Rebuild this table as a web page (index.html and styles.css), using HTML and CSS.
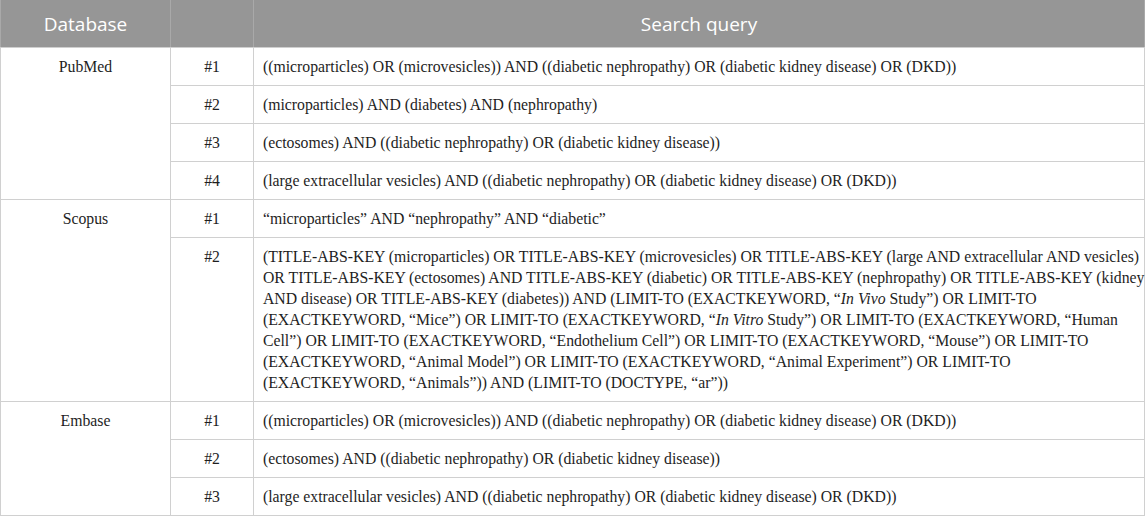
FILE: index.html
```html
<!DOCTYPE html>
<html lang="en">
<head>
<meta charset="utf-8">
<title>Search queries</title>
<link rel="stylesheet" href="styles.css">
</head>
<body>
<table class="search-table">
  <colgroup>
    <col class="col-db">
    <col class="col-num">
    <col class="col-query">
  </colgroup>
  <thead>
    <tr>
      <th class="head">Database</th>
      <th class="head"></th>
      <th class="head">Search query</th>
    </tr>
  </thead>
  <tbody>
    <tr>
      <td class="cell db" rowspan="4">PubMed</td>
      <td class="cell num">#1</td>
      <td class="cell query">((microparticles) OR (microvesicles)) AND ((diabetic nephropathy) OR (diabetic kidney disease) OR (DKD))</td>
    </tr>
    <tr>
      <td class="cell num">#2</td>
      <td class="cell query">(microparticles) AND (diabetes) AND (nephropathy)</td>
    </tr>
    <tr>
      <td class="cell num">#3</td>
      <td class="cell query">(ectosomes) AND ((diabetic nephropathy) OR (diabetic kidney disease))</td>
    </tr>
    <tr>
      <td class="cell num">#4</td>
      <td class="cell query">(large extracellular vesicles) AND ((diabetic nephropathy) OR (diabetic kidney disease) OR (DKD))</td>
    </tr>
    <tr>
      <td class="cell db" rowspan="2">Scopus</td>
      <td class="cell num">#1</td>
      <td class="cell query">“microparticles” AND “nephropathy” AND “diabetic”</td>
    </tr>
    <tr>
      <td class="cell num">#2</td>
      <td class="cell query long">(TITLE-ABS-KEY (microparticles) OR TITLE-ABS-KEY (microvesicles) OR TITLE-ABS-KEY (large AND extracellular AND vesicles)<br>
OR TITLE-ABS-KEY (ectosomes) AND TITLE-ABS-KEY (diabetic) OR TITLE-ABS-KEY (nephropathy) OR TITLE-ABS-KEY (kidney<br>
AND disease) OR TITLE-ABS-KEY (diabetes)) AND (LIMIT-TO (EXACTKEYWORD, “<i>In Vivo</i> Study”) OR LIMIT-TO<br>
(EXACTKEYWORD, “Mice”) OR LIMIT-TO (EXACTKEYWORD, “<i>In Vitro</i> Study”) OR LIMIT-TO (EXACTKEYWORD, “Human<br>
Cell”) OR LIMIT-TO (EXACTKEYWORD, “Endothelium Cell”) OR LIMIT-TO (EXACTKEYWORD, “Mouse”) OR LIMIT-TO<br>
(EXACTKEYWORD, “Animal Model”) OR LIMIT-TO (EXACTKEYWORD, “Animal Experiment”) OR LIMIT-TO<br>
(EXACTKEYWORD, “Animals”)) AND (LIMIT-TO (DOCTYPE, “ar”))</td>
    </tr>
    <tr>
      <td class="cell db" rowspan="3">Embase</td>
      <td class="cell num">#1</td>
      <td class="cell query">((microparticles) OR (microvesicles)) AND ((diabetic nephropathy) OR (diabetic kidney disease) OR (DKD))</td>
    </tr>
    <tr>
      <td class="cell num">#2</td>
      <td class="cell query">(ectosomes) AND ((diabetic nephropathy) OR (diabetic kidney disease))</td>
    </tr>
    <tr>
      <td class="cell num">#3</td>
      <td class="cell query">(large extracellular vesicles) AND ((diabetic nephropathy) OR (diabetic kidney disease) OR (DKD))</td>
    </tr>
  </tbody>
</table>
</body>
</html>
```
FILE: styles.css
```css
html, body {
  margin: 0;
  padding: 0;
  background: #ffffff;
}

.search-table {
  width: 1145px;
  border-collapse: collapse;
  table-layout: fixed;
}

.col-db { width: 170px; }
.col-num { width: 83px; }
.col-query { width: auto; }

.head {
  background: #969696;
  color: #ffffff;
  font-family: "Open Sans", "Noto Sans", sans-serif;
  font-weight: 400;
  font-size: 19px;
  line-height: 26px;
  height: 47px;
  padding: 0 8px;
  text-align: center;
  vertical-align: middle;
  border-left: 1px solid #a9a9a9;
  border-right: 1px solid #a9a9a9;
  border-bottom: 1px solid #cfcfcf;
}

.cell {
  font-family: "Liberation Serif", "Times New Roman", "DejaVu Serif", serif;
  font-size: 15.75px;
  line-height: 21px;
  color: #1e1e1e;
  border: 1px solid #d0d0d0;
  padding: 8px 9px;
  vertical-align: top;
}

.db {
  text-align: center;
}

.num {
  text-align: center;
}

.query {
  text-align: left;
}

.long {
  white-space: nowrap;
}
```
